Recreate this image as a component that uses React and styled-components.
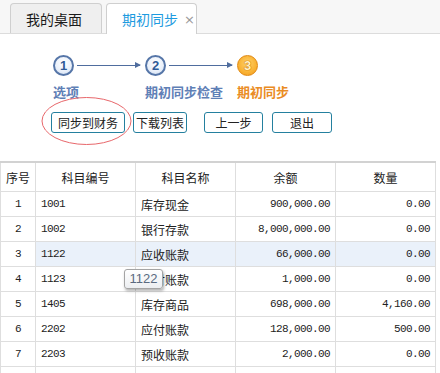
import React from "react";
import styled, { createGlobalStyle, css } from "styled-components";

const GlobalStyle = createGlobalStyle`
  html, body {
    margin: 0;
    padding: 0;
    background: #fff;
  }
  body {
    font-family: "Noto Sans CJK SC", "Liberation Sans", sans-serif;
    color: #333;
  }
`;

const CJK = `"Noto Sans CJK SC", "Liberation Sans", sans-serif`;
const MONO = `"Liberation Mono", "Noto Sans CJK SC", monospace`;

const steps = [
  { id: 1, label: "选项" },
  { id: 2, label: "期初同步检查" },
  { id: 3, label: "期初同步", current: true },
];

const buttons = [
  { text: "同步到财务", width: 74, gap: 0 },
  { text: "下载列表", width: 54, gap: 8 },
  { text: "上一步", width: 59, gap: 17 },
  { text: "退出", width: 60, gap: 9 },
];

const rows = [
  { no: 1, code: "1001", name: "库存现金", amount: "900,000.00", qty: "0.00" },
  { no: 2, code: "1002", name: "银行存款", amount: "8,000,000.00", qty: "0.00" },
  { no: 3, code: "1122", name: "应收账款", amount: "66,000.00", qty: "0.00", selected: true },
  { no: 4, code: "1123", name: "预付账款", amount: "1,000.00", qty: "0.00" },
  { no: 5, code: "1405", name: "库存商品", amount: "698,000.00", qty: "4,160.00" },
  { no: 6, code: "2202", name: "应付账款", amount: "128,000.00", qty: "500.00" },
  { no: 7, code: "2203", name: "预收账款", amount: "2,000.00", qty: "0.00" },
];

const Page = styled.div`
  position: relative;
  width: 440px;
  height: 373px;
  overflow: hidden;
`;

const TabBar = styled.div`
  display: flex;
  align-items: flex-end;
  gap: 4px;
  height: 33px;
  padding-left: 10px;
  background: #f7f7f7;
  border-bottom: 1px solid #dcdcdc;
`;

const Tab = styled.div`
  display: flex;
  align-items: center;
  justify-content: ${(p) => (p.$active ? "flex-start" : "center")};
  box-sizing: border-box;
  width: ${(p) => p.$width}px;
  height: ${(p) => (p.$active ? 31 : 30)}px;
  padding-left: ${(p) => (p.$active ? 15 : 0)}px;
  padding-right: ${(p) => (p.$active ? 0 : 4)}px;
  margin-bottom: ${(p) => (p.$active ? "-1px" : "0")};
  border: 1px solid #cfcfcf;
  border-bottom: none;
  border-radius: 4px 4px 0 0;
  background: ${(p) => (p.$active ? "#fff" : "#efefef")};
  color: ${(p) => (p.$active ? "#1e9be0" : "#1a1a1a")};
  font-family: ${CJK};
  font-size: 14px;
`;

const Close = styled.span`
  margin-left: 6px;
  color: #999;
  font-family: "DejaVu Sans", sans-serif;
  font-size: 13px;
`;

const Wizard = styled.div`
  padding: 21px 0 0 53px;
`;

const StepsRow = styled.div`
  display: flex;
`;

const Step = styled.div`
  display: flex;
  flex-direction: column;
  width: 92px;
`;

const StepHead = styled.div`
  display: flex;
  align-items: center;
  height: 21px;
`;

const Circle = styled.div`
  box-sizing: border-box;
  width: 21px;
  height: 21px;
  border-radius: 50%;
  display: flex;
  align-items: center;
  justify-content: center;
  font-family: "Liberation Sans", sans-serif;
  font-weight: bold;
  font-size: 13px;
  ${(p) =>
    p.$current
      ? css`
          border: 1.5px solid #e0870e;
          background: radial-gradient(circle at 50% 40%, #ffd36a 0%, #f9b234 60%, #f29a1b 100%);
          color: #fff1c4;
          text-shadow: 0 0 1px #d0780a, 0 0 1px #d0780a, 0 0 1px #d0780a;
        `
      : css`
          border: 2px solid #5676a8;
          background: radial-gradient(circle at 50% 35%, #ffffff 0%, #e9f0fa 60%, #c9d8ee 100%);
          color: #2f5b98;
        `}
`;

const Connector = styled.div`
  position: relative;
  flex: 1;
  height: 1.5px;
  margin: 0 5px 0 3px;
  background: #4f6d9e;

  &::after {
    content: "";
    position: absolute;
    right: -1px;
    top: -3px;
    border-left: 6px solid #4f6d9e;
    border-top: 3.5px solid transparent;
    border-bottom: 3.5px solid transparent;
  }
`;

const StepLabel = styled.div`
  margin-top: 8px;
  white-space: nowrap;
  font-family: ${CJK};
  font-weight: bold;
  font-size: 13px;
  line-height: 16px;
  color: ${(p) => (p.$current ? "#ea8c24" : "#5f80b6")};
`;

const Toolbar = styled.div`
  display: flex;
  margin-top: 12px;
  padding-left: 51px;
`;

const Button = styled.button`
  box-sizing: border-box;
  width: ${(p) => p.$width}px;
  height: 21px;
  margin-left: ${(p) => p.$gap}px;
  padding: 0;
  border: 1px solid #24809f;
  border-radius: 3px;
  background: #fff;
  color: #222;
  font-family: ${CJK};
  font-size: 12px;
  line-height: 19px;
`;

const Grid = styled.table`
  margin-top: 28px;
  width: 436px;
  border-collapse: collapse;
  table-layout: fixed;
  border-top: 2px solid #d2d2d2;
`;

const HeadCell = styled.th`
  height: 28px;
  padding: 0;
  border: 1px solid #dedede;
  border-top: none;
  font-family: ${CJK};
  font-weight: normal;
  font-size: 12px;
  color: #222;
  text-align: center;
`;

const Row = styled.tr`
  height: 25px;
`;

const Cell = styled.td`
  padding: ${(p) =>
    p.$align === "right" ? "0 5px 0 0" : p.$align === "left" ? "0 0 0 5px" : "0"};
  border: 1px solid #dedede;
  text-align: ${(p) => p.$align || "center"};
  font-family: ${(p) => (p.$cjk ? CJK : MONO)};
  font-size: ${(p) => (p.$cjk ? "12px" : "11px")};
  letter-spacing: ${(p) => (p.$cjk ? "0" : "-0.6px")};
  color: #222;
  white-space: nowrap;
  background: ${(p) => (p.$selected ? "#eaf1fa" : "#fff")};
`;

const Tooltip = styled.div`
  position: absolute;
  left: 124px;
  top: 269px;
  box-sizing: border-box;
  width: 39px;
  height: 20px;
  border: 1px solid #a4a4a4;
  border-radius: 3px;
  background: linear-gradient(#ffffff, #eceef1);
  box-shadow: 1px 2px 3px rgba(0, 0, 0, 0.3);
  color: #5a6a80;
  font-family: "Liberation Sans", sans-serif;
  font-size: 13px;
  line-height: 18px;
  text-align: center;
`;

const Mark = styled.svg`
  position: absolute;
  left: 41px;
  top: 96px;
`;

export default function App() {
  return (
    <Page>
      <GlobalStyle />
      <TabBar>
        <Tab $width={92}>我的桌面</Tab>
        <Tab $width={91} $active>
          期初同步<Close>×</Close>
        </Tab>
      </TabBar>

      <Wizard>
        <StepsRow>
          {steps.map((s, i) => (
            <Step key={s.id}>
              <StepHead>
                <Circle $current={s.current}>{s.id}</Circle>
                {i < steps.length - 1 && <Connector />}
              </StepHead>
              <StepLabel $current={s.current}>{s.label}</StepLabel>
            </Step>
          ))}
        </StepsRow>
      </Wizard>

      <Toolbar>
        {buttons.map((b) => (
          <Button key={b.text} $width={b.width} $gap={b.gap}>
            {b.text}
          </Button>
        ))}
      </Toolbar>

      <Grid>
        <colgroup>
          <col style={{ width: 35 }} />
          <col style={{ width: 100 }} />
          <col style={{ width: 100 }} />
          <col style={{ width: 100 }} />
          <col style={{ width: 100 }} />
        </colgroup>
        <thead>
          <tr>
            <HeadCell>序号</HeadCell>
            <HeadCell>科目编号</HeadCell>
            <HeadCell>科目名称</HeadCell>
            <HeadCell>余额</HeadCell>
            <HeadCell>数量</HeadCell>
          </tr>
        </thead>
        <tbody>
          {rows.map((r) => (
            <Row key={r.no}>
              <Cell>{r.no}</Cell>
              <Cell $align="left" $selected={r.selected}>{r.code}</Cell>
              <Cell $align="left" $cjk $selected={r.selected}>{r.name}</Cell>
              <Cell $align="right" $selected={r.selected}>{r.amount}</Cell>
              <Cell $align="right" $selected={r.selected}>{r.qty}</Cell>
            </Row>
          ))}
          <Row>
            <Cell />
            <Cell />
            <Cell />
            <Cell />
            <Cell />
          </Row>
        </tbody>
      </Grid>

      <Tooltip>1122</Tooltip>

      <Mark width="92" height="50" viewBox="0 0 92 50">
        <ellipse cx="45.5" cy="25" rx="44.5" ry="23.5" fill="none" stroke="#e8676b" strokeWidth="1" />
      </Mark>
    </Page>
  );
}
